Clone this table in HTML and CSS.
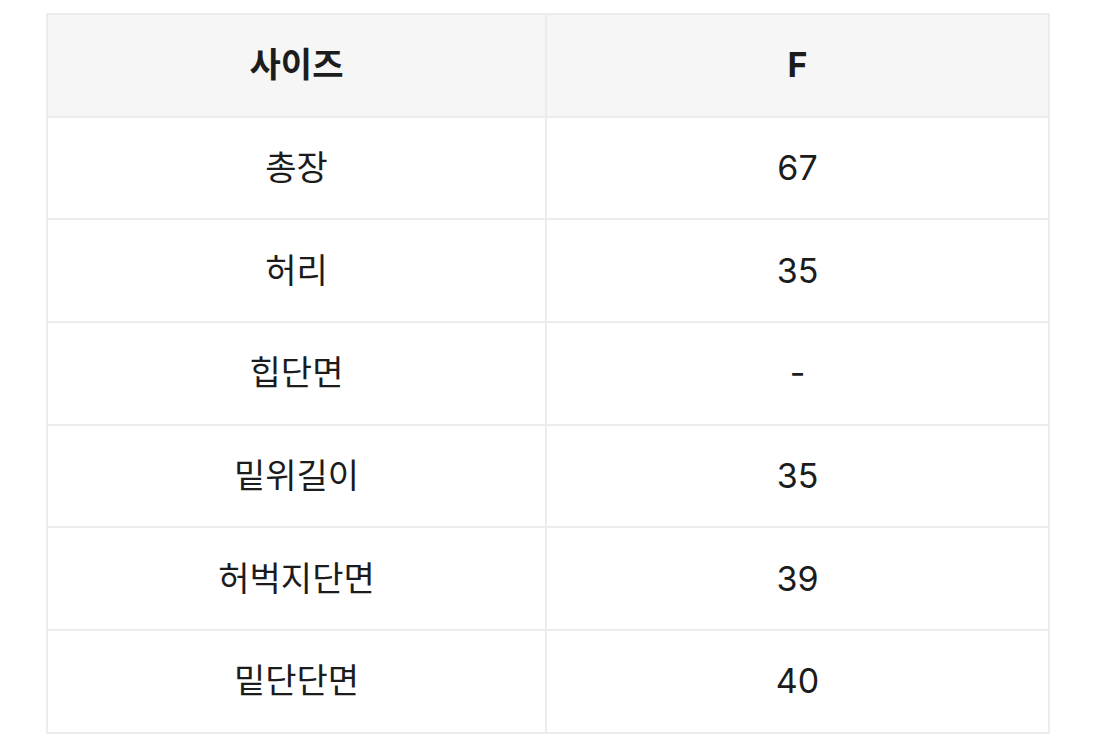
FILE: index.html
```html
<!DOCTYPE html>
<html lang="ko">
<head>
<meta charset="utf-8">
<link rel="stylesheet" href="styles.css">
</head>
<body>
<table class="size-table">
  <colgroup>
    <col class="col-label">
    <col class="col-value">
  </colgroup>
  <thead>
    <tr><th>사이즈</th><th>F</th></tr>
  </thead>
  <tbody>
    <tr><td>총장</td><td>67</td></tr>
    <tr><td>허리</td><td>35</td></tr>
    <tr><td>힙단면</td><td>-</td></tr>
    <tr><td>밑위길이</td><td>35</td></tr>
    <tr><td>허벅지단면</td><td>39</td></tr>
    <tr><td>밑단단면</td><td>40</td></tr>
  </tbody>
</table>
</body>
</html>
```

FILE: styles.css
```css
html, body {
  margin: 0;
  padding: 0;
  background: #ffffff;
}
body {
  padding: 13px 46px 0 46px;
  font-family: "Inter", "Noto Sans CJK KR", "Noto Sans", sans-serif;
  color: #1c1c1c;
}
.size-table {
  width: 1004px;
  border-collapse: collapse;
  table-layout: fixed;
}
.col-label {
  width: 499px;
}
.col-value {
  width: 503px;
}
.size-table th,
.size-table td {
  height: 100.7px;
  padding: 0;
  border: 2px solid #ececec;
  text-align: center;
  vertical-align: middle;
  font-size: 34px;
  line-height: 1;
}
.size-table th {
  background: #f6f6f6;
  font-weight: 700;
}
.size-table td {
  font-weight: 400;
}
```
